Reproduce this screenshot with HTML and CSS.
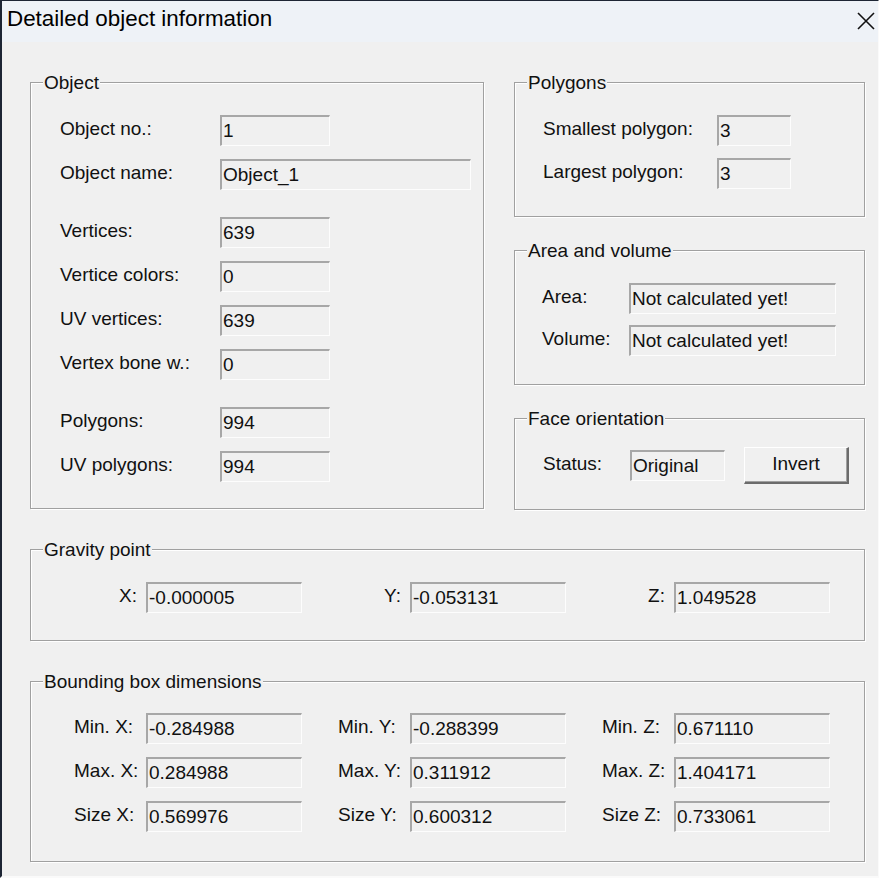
FILE: index.html
```html
<!DOCTYPE html>
<html>
<head>
<meta charset="utf-8">
<title>Detailed object information</title>
<link rel="stylesheet" href="styles.css">
</head>
<body>
<div class="window">
  <div class="titlebar">
    <span class="title">Detailed object information</span>
    <svg class="close" width="18" height="18" viewBox="0 0 18 18"><path d="M1 1 L17 17 M17 1 L1 17" stroke="#111" stroke-width="1.6" fill="none"/></svg>
  </div>
  <div class="body">
    <div class="top">
      <div class="group g-object">
        <span class="legend">Object</span>
        <div class="section">
          <div class="row"><span class="lbl w160">Object no.:</span><span class="field w110">1</span></div>
          <div class="row"><span class="lbl w160">Object name:</span><span class="field w251">Object_1</span></div>
        </div>
        <div class="section">
          <div class="row"><span class="lbl w160">Vertices:</span><span class="field w110">639</span></div>
          <div class="row"><span class="lbl w160">Vertice colors:</span><span class="field w110">0</span></div>
          <div class="row"><span class="lbl w160">UV vertices:</span><span class="field w110">639</span></div>
          <div class="row"><span class="lbl w160">Vertex bone w.:</span><span class="field w110">0</span></div>
        </div>
        <div class="section">
          <div class="row"><span class="lbl w160">Polygons:</span><span class="field w110">994</span></div>
          <div class="row"><span class="lbl w160">UV polygons:</span><span class="field w110">994</span></div>
        </div>
      </div>
      <div class="rightcol">
        <div class="group g-poly">
          <span class="legend">Polygons</span>
          <div class="section gap12">
            <div class="row"><span class="lbl w174">Smallest polygon:</span><span class="field w74">3</span></div>
            <div class="row"><span class="lbl w174">Largest polygon:</span><span class="field w74">3</span></div>
          </div>
        </div>
        <div class="group g-area">
          <span class="legend">Area and volume</span>
          <div class="section gap11">
            <div class="row"><span class="lbl w87">Area:</span><span class="field w207">Not calculated yet!</span></div>
            <div class="row"><span class="lbl w87">Volume:</span><span class="field w207">Not calculated yet!</span></div>
          </div>
        </div>
        <div class="group g-face">
          <span class="legend">Face orientation</span>
          <div class="row tall"><span class="lbl w87">Status:</span><span class="field w95">Original</span><button class="btn">Invert</button></div>
        </div>
      </div>
    </div>
    <div class="group g-gravity">
      <span class="legend">Gravity point</span>
      <div class="grid3">
        <div class="row"><span class="lbl w72 right">X:</span><span class="field w156">-0.000005</span></div>
        <div class="row"><span class="lbl w72 right">Y:</span><span class="field w156">-0.053131</span></div>
        <div class="row"><span class="lbl w72 right">Z:</span><span class="field w156">1.049528</span></div>
      </div>
    </div>
    <div class="group g-bbox">
      <span class="legend">Bounding box dimensions</span>
      <div class="grid3">
        <div class="row"><span class="lbl w72">Min. X:</span><span class="field w156">-0.284988</span></div>
        <div class="row"><span class="lbl w72">Min. Y:</span><span class="field w156">-0.288399</span></div>
        <div class="row"><span class="lbl w72">Min. Z:</span><span class="field w156">0.671110</span></div>
        <div class="row"><span class="lbl w72">Max. X:</span><span class="field w156">0.284988</span></div>
        <div class="row"><span class="lbl w72">Max. Y:</span><span class="field w156">0.311912</span></div>
        <div class="row"><span class="lbl w72">Max. Z:</span><span class="field w156">1.404171</span></div>
        <div class="row"><span class="lbl w72">Size X:</span><span class="field w156">0.569976</span></div>
        <div class="row"><span class="lbl w72">Size Y:</span><span class="field w156">0.600312</span></div>
        <div class="row"><span class="lbl w72">Size Z:</span><span class="field w156">0.733061</span></div>
      </div>
    </div>
  </div>
</div>
</body>
</html>
```
FILE: styles.css
```css
* { box-sizing: border-box; }
html, body { margin: 0; padding: 0; background: #f0f0f0; }
body {
  font-family: "Liberation Sans", Arial, sans-serif;
  font-size: 19px;
  color: #111;
}
.window {
  width: 879px;
  height: 878px;
  border-left: 2px solid #1d2534;
  border-top: 1px solid #1d2534;
  border-right: 1px solid #fafafa;
  border-bottom: 2px solid #fafafa;
  background: #f0f0f0;
  overflow: hidden;
}
.titlebar {
  height: 41px;
  background: #eef2f7;
  display: flex;
  align-items: center;
  justify-content: space-between;
  padding: 0 3px 5px 5px;
}
.title {
  font-size: 22.4px;
  color: #000;
}
.close { margin-top: 3px; }
.body {
  padding: 40px 0 0 28px;
}
.top {
  display: grid;
  grid-template-columns: 454px 351px;
  column-gap: 30px;
}
.rightcol {
  display: flex;
  flex-direction: column;
  gap: 33px;
}
.group {
  position: relative;
  border: 1px solid #a0a0a0;
  box-shadow: inset 1px 1px 0 #fff, 1px 1px 0 #fff;
}
.legend {
  position: absolute;
  top: -10px;
  left: 12px;
  padding: 0 1px;
  line-height: 20px;
  background: #f0f0f0;
}
.g-object {
  height: 427px;
  padding: 32px 0 0 29px;
}
.g-object .section + .section { margin-top: 27px; }
.section {
  display: flex;
  flex-direction: column;
  gap: 13px;
}
.section.gap12 { gap: 12px; }
.section.gap11 { gap: 11px; }
.g-poly { height: 135px; padding: 32px 0 0 28px; }
.g-area { height: 135px; padding: 32px 0 0 27px; }
.g-face { height: 92px; padding: 28px 0 0 28px; }
.row {
  display: flex;
  align-items: center;
  height: 31px;
}
.row.tall { height: 37px; }
.lbl {
  flex: none;
  white-space: nowrap;
  line-height: 22px;
  padding-bottom: 4px;
}
.lbl.right { text-align: right; padding-right: 9px; }
.w160 { width: 160px; }
.w174 { width: 174px; }
.w87 { width: 87px; }
.w72 { width: 72px; }
.field {
  flex: none;
  height: 31px;
  line-height: 27px;
  padding-left: 1px;
  white-space: nowrap;
  background: #f0f0f0;
  border-style: solid;
  border-width: 2px 1px 1px 2px;
  border-color: #a7a7a7 #fdfdfd #fdfdfd #a7a7a7;
}
.w110 { width: 110px; }
.w251 { width: 251px; }
.w74 { width: 74px; }
.w207 { width: 207px; }
.w95 { width: 95px; }
.w156 { width: 156px; }
.btn {
  margin-left: 19px;
  width: 105px;
  height: 37px;
  font: inherit;
  color: #111;
  background: #f0f0f0;
  border-style: solid;
  border-width: 1px 2px 2px 1px;
  border-color: #fff #6b6b6b #6b6b6b #fff;
  box-shadow: inset -1px -1px 0 #a0a0a0;
  padding: 0 0 2px 0;
}
.g-gravity {
  margin-top: 39px;
  width: 835px;
  height: 92px;
  padding: 32px 0 0 43px;
}
.g-bbox {
  margin-top: 40px;
  width: 835px;
  height: 181px;
  padding: 31px 0 0 43px;
}
.grid3 {
  display: grid;
  grid-template-columns: 228px 228px 228px;
  column-gap: 36px;
  row-gap: 13px;
}
```
